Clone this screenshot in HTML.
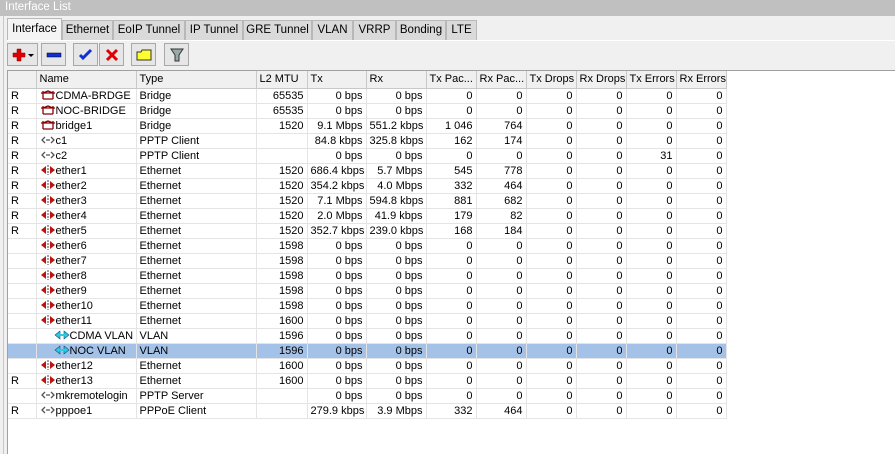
<!DOCTYPE html>
<html><head><meta charset="utf-8"><style>
*{box-sizing:border-box;margin:0;padding:0}
body{width:895px;height:454px;overflow:hidden;background:#f0f0f0;font-family:"Liberation Sans",sans-serif;font-size:11px;color:#000;position:relative}
.title{position:absolute;left:0;top:0;width:895px;height:16px;background:#c0c0c0;color:#fff;font-size:11.5px;padding:1px 0 0 5px}
.lstrip{position:absolute;left:3px;top:16px;width:1px;height:438px;background:#c8c8c8}
.tab{position:absolute;top:20px;height:21px;background:#dadada;border:1px solid #b8b8b8;border-bottom:none;padding:3px 0 0;text-align:center;font-size:11.5px}
.tab.sel{background:#f4f4f4;top:18px;height:23px;padding-top:4px}
.tline{position:absolute;left:7px;top:40px;width:888px;height:1px;background:#fff}
.btn{position:absolute;top:43px;height:23px;border:1px solid #a8a8a8;background:#e6e6e6}
.btn svg{position:absolute;left:0;top:0}
.grid{position:absolute;left:7px;top:70px;width:888px;height:384px;background:#fff;border-top:1px solid #a0a0a0;border-left:1px solid #a0a0a0}
table{border-collapse:collapse;table-layout:fixed;position:absolute;left:0;top:0;width:718px}
td{height:15px;border-right:1px solid #e4e4e4;border-bottom:1px solid #e4e4e4;padding:0 3px;white-space:nowrap;overflow:hidden;line-height:14px}
tr.h td{height:17px;background:#f0f0f0;border-right:1px solid #c8c8c8;border-bottom:1px solid #c8c8c8;line-height:16px}
td.r{text-align:right}
tr.s td{background:#a4c2e8}
.ic{display:inline-block;width:16px;height:10px;vertical-align:-1px;margin-right:0}
</style></head><body>
<div class="title">Interface List</div>
<div class="lstrip"></div>
<div class="tab sel" style="left:7px;width:55px">Interface</div>
<div class="tab" style="left:62px;width:51px">Ethernet</div>
<div class="tab" style="left:113px;width:72px">EoIP Tunnel</div>
<div class="tab" style="left:185px;width:58px">IP Tunnel</div>
<div class="tab" style="left:243px;width:69px">GRE Tunnel</div>
<div class="tab" style="left:312px;width:41px">VLAN</div>
<div class="tab" style="left:353px;width:43px">VRRP</div>
<div class="tab" style="left:396px;width:50px">Bonding</div>
<div class="tab" style="left:446px;width:31px">LTE</div>
<div class="tline"></div>
<div class="btn" style="left:7px;width:31px"><svg width="30" height="22"><path d="M9 5h4v4h4v4h-4v4h-4v-4h-4v-4h4z" fill="#e00000" stroke="#800" stroke-width=".5"/><path d="M20 10h6l-3 3z" fill="#000"/></svg></div>
<div class="btn" style="left:41px;width:25px"><svg width="24" height="22"><rect x="5" y="9" width="14" height="4" fill="#1030d0" stroke="#002" stroke-width=".5"/></svg></div>
<div class="btn" style="left:73px;width:25px"><svg width="24" height="22"><path d="M6 11l3 3 8-8" fill="none" stroke="#1030d0" stroke-width="3"/></svg></div>
<div class="btn" style="left:99px;width:25px"><svg width="24" height="22"><path d="M7 6l10 10M17 6L7 16" stroke="#e00000" stroke-width="3"/></svg></div>
<div class="btn" style="left:131px;width:25px"><svg width="24" height="22"><path d="M5 8h4l1-2h9v10H5z" fill="#ffff30" stroke="#333"/></svg></div>
<div class="btn" style="left:164px;width:25px"><svg width="24" height="22"><path d="M6 5h12l-4 6v6h-4v-6z" fill="#9aa" stroke="#333"/></svg></div>
<div class="grid"><table>
<colgroup><col style="width:28px"><col style="width:100px"><col style="width:120px"><col style="width:51px"><col style="width:59px"><col style="width:60px"><col style="width:50px"><col style="width:50px"><col style="width:50px"><col style="width:50px"><col style="width:50px"><col style="width:50px"></colgroup>
<tr class="h"><td></td><td>Name</td><td>Type</td><td>L2 MTU</td><td>Tx</td><td>Rx</td><td>Tx Pac...</td><td>Rx Pac...</td><td>Tx Drops</td><td>Rx Drops</td><td>Tx Errors</td><td>Rx Errors</td></tr>
</table></div>
<script>
var B='<svg class="ic" viewBox="0 0 16 10"><path d="M1 3h14M3 1v8M13 1v8M3 3l5-2 5 2M3 9h10" stroke="#800" fill="none" stroke-width="1.3"/></svg>';
var P='<svg class="ic" viewBox="0 0 16 10"><path d="M5 2L2 5l3 3M11 2l3 3-3 3M6 5h4" stroke="#555" fill="none" stroke-width="1.3"/></svg>';
var E='<svg class="ic" viewBox="0 0 16 10"><path d="M6 1L1 5l5 4zM10 1l5 4-5 4z" fill="#c01010"/><path d="M8 0v10" stroke="#444" stroke-dasharray="2 1"/></svg>';
var V='<svg class="ic" viewBox="0 0 16 10"><path d="M6 1L1 5l5 4zM10 1l5 4-5 4z" fill="#30c8e0" stroke="#058" stroke-width=".6"/><path d="M5 4h6v2H5z" fill="#30c8e0"/></svg>';
var rows=[
["R",B,"CDMA-BRDGE","Bridge","65535","0 bps","0 bps","0","0","0","0","0","0"],
["R",B,"NOC-BRIDGE","Bridge","65535","0 bps","0 bps","0","0","0","0","0","0"],
["R",B,"bridge1","Bridge","1520","9.1 Mbps","551.2 kbps","1 046","764","0","0","0","0"],
["R",P,"c1","PPTP Client","","84.8 kbps","325.8 kbps","162","174","0","0","0","0"],
["R",P,"c2","PPTP Client","","0 bps","0 bps","0","0","0","0","31","0"],
["R",E,"ether1","Ethernet","1520","686.4 kbps","5.7 Mbps","545","778","0","0","0","0"],
["R",E,"ether2","Ethernet","1520","354.2 kbps","4.0 Mbps","332","464","0","0","0","0"],
["R",E,"ether3","Ethernet","1520","7.1 Mbps","594.8 kbps","881","682","0","0","0","0"],
["R",E,"ether4","Ethernet","1520","2.0 Mbps","41.9 kbps","179","82","0","0","0","0"],
["R",E,"ether5","Ethernet","1520","352.7 kbps","239.0 kbps","168","184","0","0","0","0"],
["",E,"ether6","Ethernet","1598","0 bps","0 bps","0","0","0","0","0","0"],
["",E,"ether7","Ethernet","1598","0 bps","0 bps","0","0","0","0","0","0"],
["",E,"ether8","Ethernet","1598","0 bps","0 bps","0","0","0","0","0","0"],
["",E,"ether9","Ethernet","1598","0 bps","0 bps","0","0","0","0","0","0"],
["",E,"ether10","Ethernet","1598","0 bps","0 bps","0","0","0","0","0","0"],
["",E,"ether11","Ethernet","1600","0 bps","0 bps","0","0","0","0","0","0"],
["v",V,"CDMA VLAN","VLAN","1596","0 bps","0 bps","0","0","0","0","0","0"],
["s",V,"NOC VLAN","VLAN","1596","0 bps","0 bps","0","0","0","0","0","0"],
["",E,"ether12","Ethernet","1600","0 bps","0 bps","0","0","0","0","0","0"],
["R",E,"ether13","Ethernet","1600","0 bps","0 bps","0","0","0","0","0","0"],
["",P,"mkremotelogin","PPTP Server","","0 bps","0 bps","0","0","0","0","0","0"],
["R",P,"pppoe1","PPPoE Client","","279.9 kbps","3.9 Mbps","332","464","0","0","0","0"]];
var t=document.querySelector('table'),h='';
rows.forEach(function(r){var f=r[0],cls=f=='s'?' class="s"':'',ind=(f=='v'||f=='s')?'padding-left:17px':'';
h+='<tr'+cls+'><td>'+(f=='R'?'R':'')+'</td><td style="'+ind+'">'+r[1]+r[2]+'</td><td>'+r[3]+'</td>';
for(var i=4;i<13;i++)h+='<td class="r">'+r[i]+'</td>';h+='</tr>';});
t.insertAdjacentHTML('beforeend',h);
</script>
</body></html>
